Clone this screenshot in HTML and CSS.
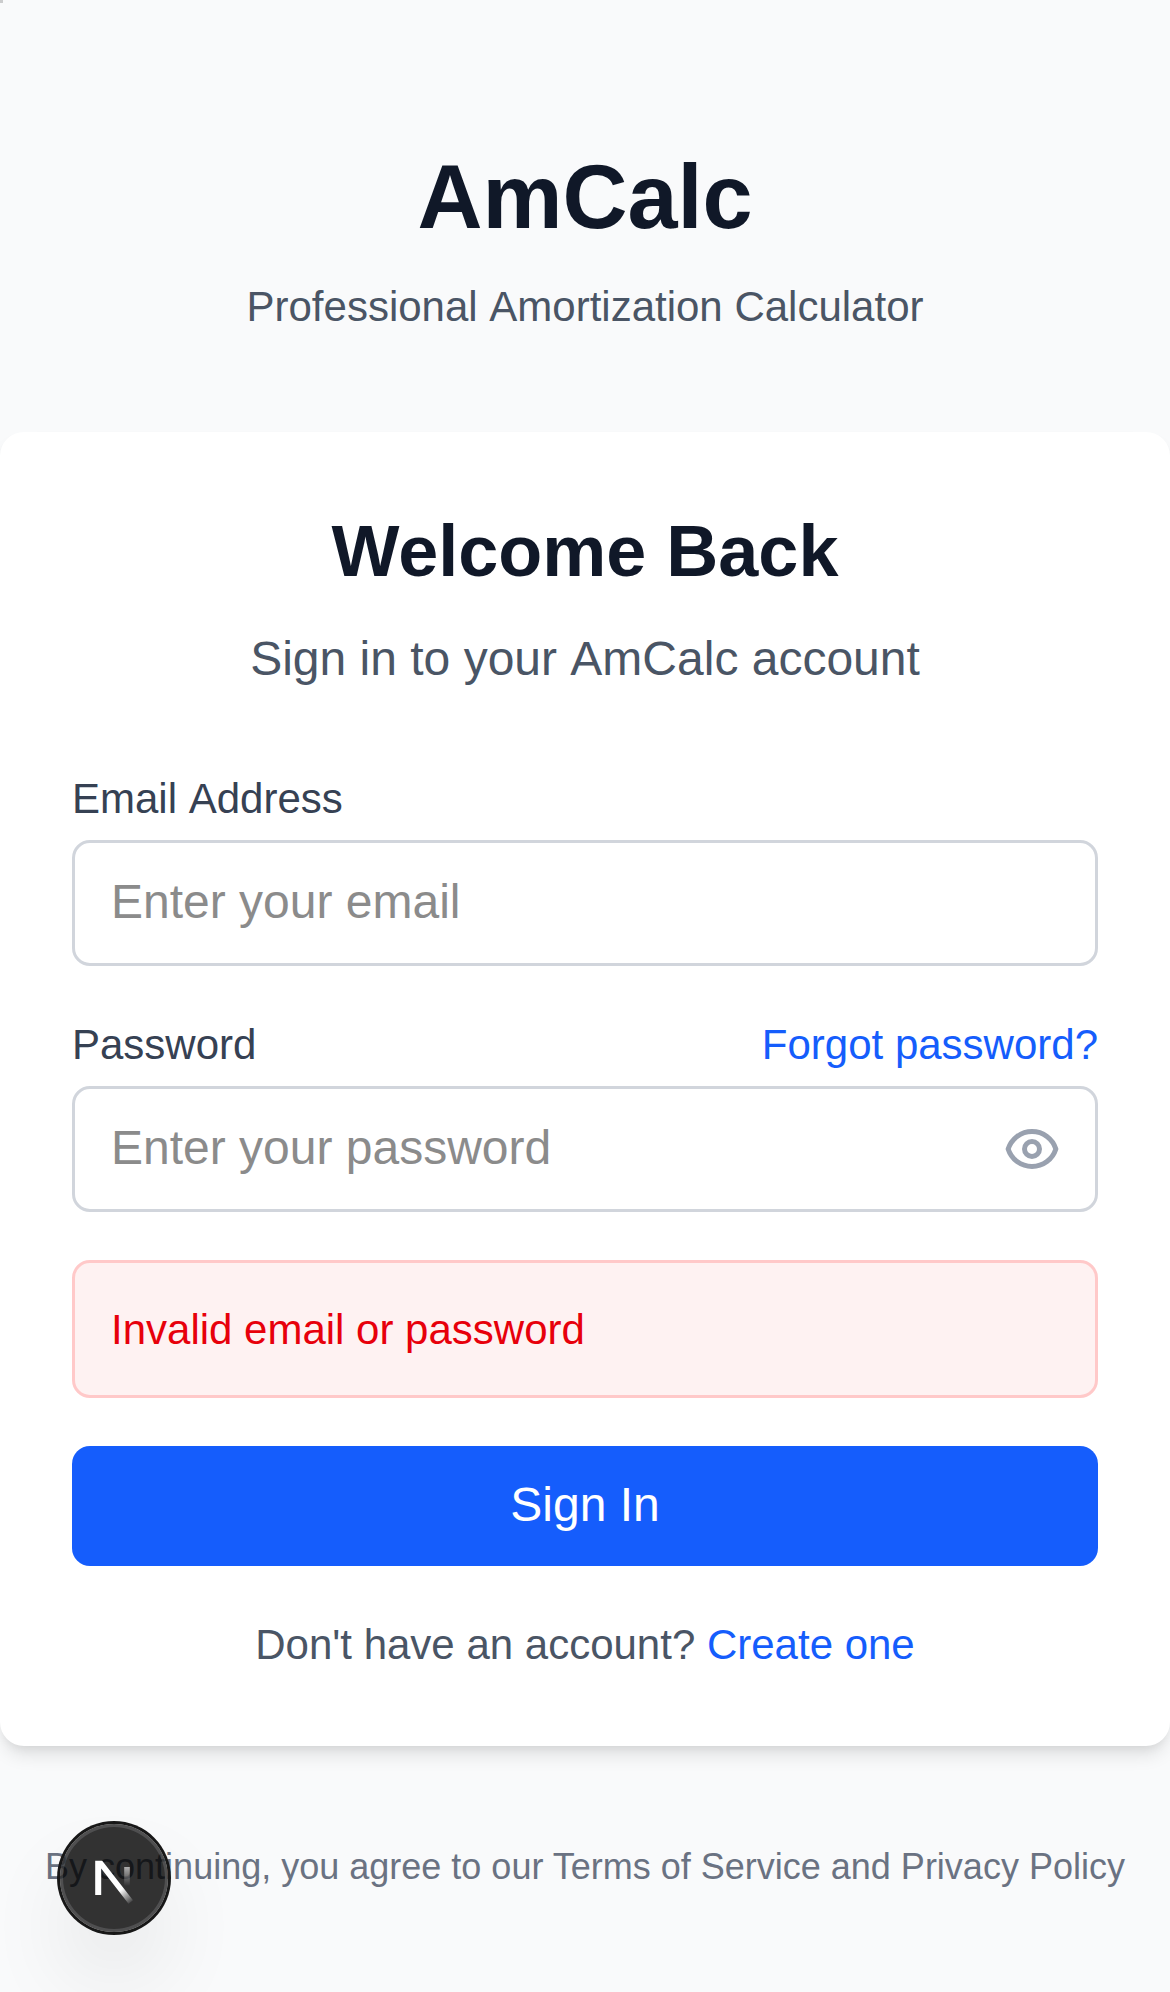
FILE: index.html
```html
<!DOCTYPE html>
<html lang="en">
<head>
<meta charset="utf-8">
<title>AmCalc</title>
<link rel="stylesheet" href="styles.css">
</head>
<body>
<div class="corner"></div>
<main class="page">
  <header class="brand">
    <h1 class="brand-name">AmCalc</h1>
    <p class="tagline">Professional Amortization Calculator</p>
  </header>
  <section class="card">
    <h2 class="card-title">Welcome Back</h2>
    <p class="card-subtitle">Sign in to your AmCalc account</p>
    <form class="form">
      <div class="field">
        <label class="label" for="email">Email Address</label>
        <div class="control"><input class="input" id="email" type="email" placeholder="Enter your email"></div>
      </div>
      <div class="field">
        <div class="label-row"><label class="label" for="password">Password</label><a class="link">Forgot password?</a></div>
        <div class="control">
          <input class="input" id="password" type="password" placeholder="Enter your password">
          <svg class="eye" viewBox="0 0 24 24" fill="none" stroke="currentColor" stroke-width="2" stroke-linecap="round" stroke-linejoin="round"><path d="M15 12a3 3 0 11-6 0 3 3 0 016 0z"/><path d="M2.458 12C3.732 7.943 7.523 5 12 5c4.478 0 8.268 2.943 9.542 7-1.274 4.057-5.064 7-9.542 7-4.477 0-8.268-2.943-9.542-7z"/></svg>
        </div>
      </div>
      <div class="alert">Invalid email or password</div>
      <button class="submit" type="button">Sign In</button>
    </form>
    <p class="signup">Don't have an account? <a class="link">Create one</a></p>
  </section>
  <p class="terms">By continuing, you agree to our Terms of Service and Privacy Policy</p>
</main>
<div class="badge">
  <svg class="badge-icon" viewBox="0 0 108 108" fill="none">
    <defs>
      <linearGradient id="diag" gradientUnits="userSpaceOnUse" x1="60.5" y1="66" x2="71.5" y2="80"><stop stop-color="#fff"/><stop offset="1" stop-color="#fff" stop-opacity="0"/></linearGradient>
      <linearGradient id="stem" gradientUnits="userSpaceOnUse" x1="67" y1="37" x2="67" y2="62"><stop stop-color="#fff" stop-opacity=".8"/><stop offset="1" stop-color="#fff" stop-opacity="0"/></linearGradient>
    </defs>
    <path d="M67 43v20" stroke="url(#stem)" stroke-width="5.6"/>
    <path d="M35.2 71V36.8h7L73 76.2 68.5 79.7 41.2 44.5V71z" fill="url(#diag)"/>
  </svg>
</div>
</body>
</html>
```
FILE: styles.css
```css
* { box-sizing: border-box; margin: 0; padding: 0; }
body { background: #f9fafb; font-family: "Liberation Sans", Arial, sans-serif; color: #4a5565; }
.corner { position: absolute; left: 0; top: 0; width: 3px; height: 3px; background: #cbcccd; }
.page { height: 1992px; padding-top: 143px; overflow: hidden; text-align: center; }
.brand { height: 289px; }
.brand-name { font-size: 90px; line-height: 108px; color: #101828; }
.tagline { margin-top: 26px; font-size: 42px; line-height: 60px; font-kerning: none; }
.card { height: 1314px; padding: 71px 72px 72px; background: #fff; border-radius: 24px; box-shadow: 0 12px 18px -3px rgba(0,0,0,.1), 0 6px 12px -6px rgba(0,0,0,.1); }
.card-title { font-size: 72px; line-height: 96px; color: #101828; }
.card-subtitle { margin-top: 24px; font-size: 48px; line-height: 72px; font-kerning: none; }
.form { display: flex; flex-direction: column; gap: 48px; margin-top: 74px; text-align: left; }
.field { display: flex; flex-direction: column; gap: 11px; }
.field + .field { padding-top: 1px; }
.label-row { display: flex; justify-content: space-between; }
.label, .label-row .link { font-size: 42px; line-height: 60px; }
.label { color: #364153; font-kerning: none; }
.link { color: #155dfc; }
.control { position: relative; height: 126px; }
.input { display: block; width: 100%; height: 126px; padding: 0 36px 3px; border: 3px solid #d1d5dc; border-radius: 18px; background: #fff; font: 48px "Liberation Sans", Arial, sans-serif; }
.input::placeholder { color: #8b8b8b; }
.eye { position: absolute; right: 36px; top: 33px; width: 60px; height: 60px; color: #99a1af; }
.alert { height: 138px; padding: 37px 36px 35px; border: 3px solid #ffc9c9; border-radius: 18px; background: #fef2f2; color: #e7000b; font-size: 42px; line-height: 60px; }
.submit { height: 120px; padding-bottom: 3px; border: 0; border-radius: 18px; background: #155dfc; color: #fff; font: 48px "Liberation Sans", Arial, sans-serif; }
.signup { margin-top: 49px; font-size: 42px; line-height: 60px; }
.terms { margin-top: 97px; font-size: 36px; line-height: 48px; color: #6a7282; }
.badge { position: fixed; left: 60px; top: 1824px; width: 108px; height: 108px; border-radius: 50%; background: rgba(0,0,0,.8); box-shadow: 0 0 0 3px #171717, inset 0 0 0 3px rgba(255,255,255,.14), 0 48px 96px -24px rgba(0,0,0,.24); }
.badge-icon { display: block; width: 108px; height: 108px; }
```
